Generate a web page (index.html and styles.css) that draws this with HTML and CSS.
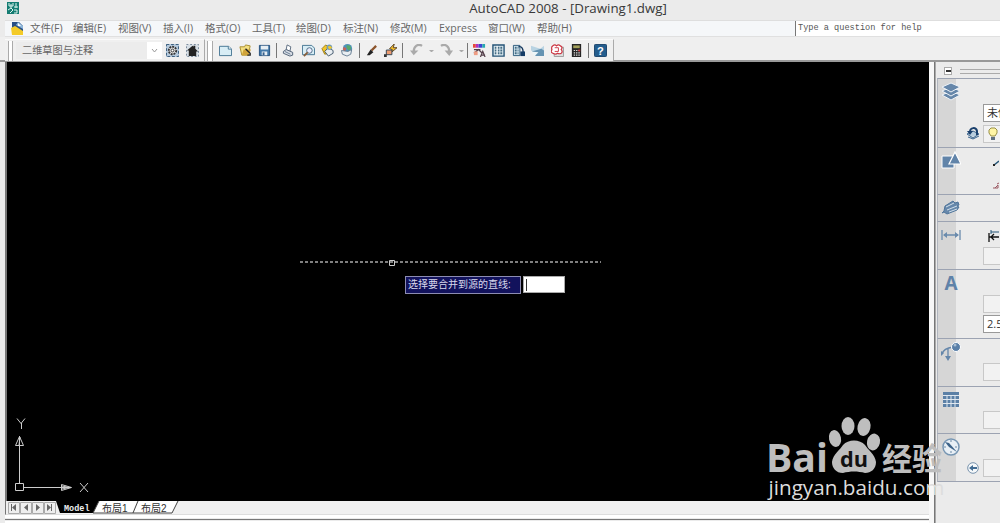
FILE: index.html
```
<!DOCTYPE html>
<html lang="zh-CN">
<head>
    <meta charset="UTF-8">
    <title>AutoCAD 2008 - [Drawing1.dwg]</title>
    <link rel="stylesheet" href="styles.css">
</head>
<body>
    <header class="titlebar">
        <svg class="app-icon" width="12" height="12" viewBox="0 0 12 12"><path fill="#147c72" d="M0 0h12v12H0z"/><path fill="none" stroke="#dff5ef" d="M2 1v3M4 2v4M6 1v3H2M9 1v5M1 8l3-2 2 2-3 3M7 8h3v3H7M7 5h4"/></svg>
        <h1>AutoCAD 2008 - [Drawing1.dwg]</h1>
    </header>

    <nav class="menubar">
        <svg class="doc-icon" width="13" height="13" viewBox="0 0 13 13"><path fill="#284f85" d="M1 0h7l4 4v8H1z"/><path fill="#8eb7da" d="M7 0l5 4v3L5 3z"/><path fill="#f4cb28" d="M0 6l4-2 8 5v4H1z"/><path fill="#fff" d="M7 1l3 3H7z"/></svg>
        <div class="menu-items">
            <span>文件(F)</span>
            <span>编辑(E)</span>
            <span>视图(V)</span>
            <span>插入(I)</span>
            <span>格式(O)</span>
            <span>工具(T)</span>
            <span>绘图(D)</span>
            <span>标注(N)</span>
            <span>修改(M)</span>
            <span>Express</span>
            <span>窗口(W)</span>
            <span>帮助(H)</span>
        </div>
        <div class="ask">Type a question for help</div>
    </nav>

    <div class="toolbars">
        <div class="toolbar workspaces">
            <i class="grip"></i>
            <div class="combo"><span>二维草图与注释</span><b><svg width="7" height="5" viewBox="0 0 7 5"><path d="M1 1l2.5 3L6 1" fill="none" stroke="#999"/></svg></b></div>
            <span class="tool"><svg viewBox="0 0 14 14"><path fill="#b5c9dc" d="M0 0h14v14H0z"/><path stroke="#315577" fill="none" stroke-dasharray="3 2" d="M.5.5h13v13H.5z"/><circle cx="7" cy="7" r="4" fill="#ddd" stroke="#333" stroke-width="2" stroke-dasharray="2 1"/><circle cx="7" cy="7" r="1.5" fill="#fff" stroke="#333"/></svg></span>
            <span class="tool"><svg viewBox="0 0 14 14"><path stroke="#708294" fill="#d5dde4" stroke-dasharray="2 2" d="M.5.5h13v13H.5z"/><path fill="#222" d="M1 7l6-5 1 1V2h2v3l3 3h-2v5H3V7z"/></svg></span>
        </div>
        <div class="toolbar standard">
            <i class="grip"></i>
            <span class="tool"><svg viewBox="0 0 14 14"><path fill="#d8edf5" stroke="#427291" d="M.5 2.500h10l3 3v7H.5z"/><path fill="#fff" stroke="#427291" d="M10 2.500v3h3"/></svg></span>
            <span class="tool"><svg viewBox="0 0 14 14"><path fill="#f4df80" stroke="#a88b2b" d="M1 3h5l1-2 5 1-2 10H3z"/><path fill="#d0a339" d="M3 12l2-6h8l-3 6z"/><path fill="none" stroke="#222" stroke-width="1.500" d="M7 5l5 5v2H9"/></svg></span>
            <span class="tool"><svg viewBox="0 0 14 14"><path fill="#4379a9" stroke="#244e7a" d="M1.500 1.500h11v11h-11z"/><path fill="#e7eef3" d="M3 2h8v4H3zM4 8h6v4H4z"/><path fill="#365f8b" d="M5 9h2v3H5z"/></svg></span>
            <i class="sep"></i>
            <span class="tool"><svg viewBox="0 0 14 14"><path fill="#fff" stroke="#57687c" d="M4.500 6l1-5 4 2-1 5z"/><path fill="#d8dde5" stroke="#4c5d72" d="M1.500 8l3-2 7 3v3l-3 1-7-3z"/><path stroke="#627992" d="M3 8l6 3"/></svg></span>
            <span class="tool"><svg viewBox="0 0 14 14"><path fill="#d8edf5" stroke="#427291" d="M.5 1.500h10l3 3v7H.5z"/><circle cx="8" cy="7" r="3" fill="#eef" stroke="#486881"/><path stroke="#875d3b" stroke-width="2" d="M6 9l-4 4"/></svg></span>
            <span class="tool"><svg viewBox="0 0 14 14"><path fill="#f4c629" stroke="#9b7a13" d="M1 5l4-4 3 2-3 5 3 2-4 1z"/><path fill="#e8edf1" stroke="#41566b" d="M4 8l4-4 5 3v3l-5 3z"/><circle cx="9" cy="3.500" r="3" fill="#6e9bbc"/><path fill="#efc72d" d="M7 3l3-1 2 2-3 2z"/></svg></span>
            <span class="tool"><svg viewBox="0 0 14 14"><circle cx="7" cy="5" r="5" fill="#4f91bc"/><path fill="#55a96b" d="M6 1l4 1 1 3-3 2-2-3z"/><path fill="#ca6055" d="M3 3l3 2-2 3-2-2z"/><path fill="#e9eef2" stroke="#637b91" d="M.5 7l7 1 4-2-1 5-4 2-5-2z"/></svg></span>
            <i class="sep"></i>
            <span class="tool"><svg viewBox="0 0 14 14"><path stroke="#8b542c" stroke-width="2.500" d="M12 2L7 7"/><path fill="#222" d="M6 6l3 3-4 3H2z"/></svg></span>
            <span class="tool"><svg viewBox="0 0 14 14"><path fill="#f7c22b" stroke="#574020" d="M6 5l5-5-1 4h4L8 9l1-3z"/><path fill="#ed9b70" stroke="#304250" d="M2.500 6.500h6v5h-6z"/><path fill="#333" d="M0 11h3v3H0z"/></svg></span>
            <i class="sep"></i>
            <span class="tool undo"><svg viewBox="0 0 14 14"><path d="M13 2C8-1 4 3 4 8" fill="none" stroke="#aaa" stroke-width="2.400"/><path fill="#aaa" d="M0 7h9l-5 5z"/></svg></span>
            <i class="drop"></i>
            <span class="tool undo"><svg viewBox="0 0 14 14"><path d="M1 2c5-3 9 1 9 6" fill="none" stroke="#aaa" stroke-width="2.400"/><path fill="#aaa" d="M5 7h9l-4 6z"/></svg></span>
            <i class="drop"></i>
            <i class="sep"></i>
            <span class="tool"><svg viewBox="0 0 14 14"><path fill="#e64a38" d="M0 0h3v4H0z"/><path fill="#b42fbd" d="M3 0h3v4H3z"/><path fill="#3c45d1" d="M6 0h4v4H6z"/><path fill="#27a8af" d="M10 0h3v4h-3z"/><path fill="none" stroke="#54404b" stroke-width="1.300" d="M1 6h7M1 10l5-4 4 4M8 14l2.500-6 2.500 6M9 12h4"/><path fill="#ee9c83" d="M1 8h4v4H1z"/></svg></span>
            <span class="tool"><svg viewBox="0 0 14 14"><path fill="#dceaf0" stroke="#245375" stroke-width="1.500" d="M1 1h12v12H1z"/><path stroke="#426b83" stroke-width="2" stroke-dasharray="2 1" d="M3 4h8M3 7h8M3 10h8"/><path stroke="#fff" d="M5.500 2v10"/></svg></span>
            <span class="tool"><svg viewBox="0 0 14 14"><path fill="#d7e9f2" stroke="#285879" d="M1.500 1.500h7v11h-7z"/><path stroke="#426b83" stroke-dasharray="2 1" stroke-width="2" d="M3 4h4M3 7h4M3 10h4"/><path fill="none" stroke="#183a60" stroke-width="1.500" d="M7 3c4-1 5 3 5 6"/><path fill="#153b65" d="M9 8h5v5H9z"/></svg></span>
            <span class="tool"><svg viewBox="0 0 14 14"><path fill="#b9d3e2" d="M0 2l10 3 4-3v5L8 10 0 7z"/><path fill="#6593b2" d="M1 8l10-3 3 2v6H5z"/><path fill="#edf5f8" d="M0 8l8 1-4 4z"/></svg></span>
            <span class="tool"><svg viewBox="0 0 14 14"><path fill="#ddd" stroke="#999" d="M3.500 3.500h10v10h-10z"/><path fill="#fff" stroke="#cb3642" stroke-width="1.300" d="M2 2q2-2 4 0 2-2 4 0 3 1 1 4 2 2 0 4-2 1-4 0-2 2-5 0-3-1-1-4-1-3 1-4z"/><path fill="none" stroke="#cb3642" d="M4 4h4v4H4"/></svg></span>
            <span class="tool"><svg viewBox="0 0 14 14"><path fill="#242424" d="M2 0h10v14H2z"/><path fill="#a3a05a" d="M3.500 1.500h7v3h-7z"/><path stroke="#ddd" stroke-width="1.300" stroke-dasharray="1.500 1" d="M4 7h7M4 9.500h7M4 12h7"/><path fill="#d23838" d="M9 6h2v2H9z"/></svg></span>
            <i class="sep"></i>
            <span class="tool help"><svg viewBox="0 0 14 14"><rect x=".5" y=".5" width="13" height="13" rx="1" fill="#235d8d" stroke="#163f67"/><text x="7" y="11.500">?</text></svg></span>
        </div>
    </div>

    <main class="workspace">
        <section class="document">
            <div class="canvas">
                <svg class="drawing" width="922" height="439" viewBox="7 62 922 439">
                    <path class="selected-line" d="M300 262h301"/>
                    <path class="cad-line" d="M389.500 260.500h5v5h-5z"/>
                    <path class="cad-line" d="M15.500 483.500h8v7h-8zM19.500 483v-47M23 487.500h48M15.500 445.500h8l-4-9zM19 445l1-8M61.500 484.500v6l10-3zM62 486l7 1.500-7 1.500M17 418.500l4 5 4-5M21.500 423v6M80 483l8 9M88 483l-8 9"/>
                </svg>
                <div class="prompt"><label>选择要合并到源的直线:</label><span class="entry"></span></div>
            </div>
            <div class="tabs">
                <svg width="175" height="14" viewBox="0 0 175 14">
                    <path fill="#eee" stroke="#aaa" d="M.5 1.500h11v11H.5zM12.500 1.500h11v11h-11zM24.500 1.500h11v11h-11zM36.500 1.500h11v11h-11z"/>
                    <path fill="#666" d="M8 3v7L4 6.500zM3 3h1v7H3zM20 3v7l-4-3.500zM28 3v7l4-3.500zM39 3v7l4-3.500zM43 3h1v7h-1z"/>
                    <path d="M48 0h43l-6 12H52z"/>
                    <path fill="#fff" d="M91 0h38l-5 12H86zM130 0h39l-5 12h-39z"/>
                    <path fill="none" stroke="#444" d="M91 0l-6 12h40l5-12M125 12h39l6-12"/>
                    <text class="model" x="56" y="10">Model</text>
                    <text x="94" y="10.500">布局1</text>
                    <text x="133" y="10.500">布局2</text>
                </svg>
            </div>
            <div class="dock"></div>
        </section>

        <aside class="dashboard">
            <div class="dash-head"><i></i><b></b></div>
            <div class="panel layers">
                <svg class="panel-icon" viewBox="0 0 20 20"><g fill="#6687aa" stroke="#eef3f8" stroke-width="1"><path d="M1 13l9-4 9 4-9 5z"/><path d="M1 9l9-4 9 4-9 5z"/><path d="M1 5l9-4 9 4-9 5z"/></g></svg>
                <div class="field layer-name">未保存</div>
                <svg class="layer-prev" width="15" height="14" viewBox="0 0 15 14"><path fill="#b8cddd" stroke="#41688f" d="M1 8l6-3 6 3-6 4zM2 11l5 2 6-3"/><path fill="none" stroke="#193f6c" stroke-width="2" d="M4 6c0-5 6-5 7-1v4"/><path fill="#193f6c" d="M1 5h6l-3 4z"/></svg>
                <div class="field lamp"><svg width="10" height="14" viewBox="0 0 10 14"><path fill="#fff5a5" stroke="#999045" d="M3 9L1 6V3l2-2h4l2 2v3L7 9z"/><path fill="#607080" d="M3 10h4v3H3z"/></svg></div>
            </div>
            <div class="panel draw">
                <svg class="panel-icon" viewBox="0 0 20 20"><path fill="#6184a9" stroke="#fff" d="M1 5h12v12H1z"/><path fill="#6184a9" stroke="#fff" stroke-width="1.200" d="M14 1l6 12H8z"/></svg>
                <svg class="mini mini-line" width="6" height="8" viewBox="0 0 6 8"><path stroke="#245577" stroke-width="1.500" d="M1 6l5-4"/><path fill="#222" d="M0 5h2v2H0z"/></svg>
                <svg class="mini mini-cloud" width="6" height="8" viewBox="0 0 6 8"><path fill="none" stroke="#9b5962" d="M0 6h5V3L2 6M4 2l2-1"/></svg>
            </div>
            <div class="panel tools">
                <svg class="panel-icon" viewBox="0 0 20 20"><path fill="#6688ab" stroke="#50759a" d="M1 15l2-2 1-5 8-5 2 2 3-1 1 3-2 1 2 1-2 3-10 4-3-2z"/><path stroke="#d3e0ea" d="M5 9l8-4M6 12l10-4M8 14l8-3"/></svg>
            </div>
            <div class="panel dims">
                <svg class="panel-icon" viewBox="0 0 20 20"><path fill="none" stroke="#6a8bad" stroke-width="1.300" d="M1 5v10M19 5v10M3 10h14"/><path fill="#6a8bad" d="M2 10l4-3v6zM18 10l-4-3v6z"/></svg>
                <svg class="mini mini-dim" width="11" height="13" viewBox="0 0 11 13"><path fill="none" stroke="#245577" d="M3 1v4M3 3h8"/><path fill="none" stroke="#111" stroke-width="1.300" d="M1 4v9M1 8h10M6 5L3 8l3 3"/></svg>
                <div class="field empty-a"></div>
            </div>
            <div class="panel text">
                <svg class="panel-icon" viewBox="0 0 20 20"><text x="10" y="17">A</text></svg>
                <div class="field empty-b"></div>
                <div class="field height">2.5</div>
            </div>
            <div class="panel leader">
                <svg class="panel-icon" viewBox="0 0 20 20"><path fill="none" stroke="#6486aa" stroke-width="1.300" d="M1 12C2 8 5 6 12 5M7 6v9"/><path fill="#6486aa" d="M0 9v5l3-3zM4 14h6l-3 5z"/><circle cx="15" cy="5" r="4.500" fill="#597fa8" stroke="#fff"/><circle cx="14" cy="3" r="1.500" fill="#a7bdd2"/></svg>
                <div class="field empty-c"></div>
            </div>
            <div class="panel table">
                <svg class="panel-icon" viewBox="0 0 20 20"><path fill="#5b80a6" d="M2 2h16v15H2z"/><path fill="none" stroke="#e0e8f0" d="M2 5.500h16M2 9.500h16M2 13.500h16M6 6v11M10 6v11M14 6v11"/></svg>
                <div class="field empty-c"></div>
            </div>
            <div class="panel nav">
                <svg class="panel-icon" viewBox="0 0 20 20"><circle cx="10" cy="10" r="8" fill="#e8eff5" stroke="#7796b3" stroke-width="1.500"/><path stroke="#6c89a5" stroke-dasharray="2 9" d="M10 3v14M3 10h14"/><path fill="#3d6389" d="M4 5l4 1 8 9-8-5z"/></svg>
                <svg class="back" width="12" height="12" viewBox="0 0 12 12"><circle cx="6" cy="6" r="5.300" fill="#f5f8fa" stroke="#7792ac"/><path fill="#426c93" d="M2 6l4-3v2h4v2H6v2z"/></svg>
                <div class="field empty-d"></div>
            </div>
        </aside>
    </main>

    <svg class="watermark" width="184" height="86" viewBox="764 414 184 86">
        <g fill="#bebebe">
            <text class="brand" x="766" y="472" textLength="62" lengthAdjust="spacingAndGlyphs">Bai</text>
            <ellipse cx="835" cy="438.500" rx="6" ry="8.500" transform="rotate(-12 835 438.500)"/>
            <ellipse cx="848" cy="426" rx="6.500" ry="9"/>
            <ellipse cx="864" cy="427" rx="6.500" ry="9" transform="rotate(12 864 427)"/>
            <ellipse cx="873.500" cy="442" rx="6.500" ry="8.500" transform="rotate(12 873.500 442)"/>
            <path d="M843 445c5-6 17-6 22 0 3 5 10 9 11 17 0 7-5 11-11 11-7-2-15-2-22 0-7 0-11-5-11-11 1-8 8-12 11-17z"/>
            <text class="jingyan" x="882" y="469.500" textLength="60" lengthAdjust="spacingAndGlyphs">经验</text>
        </g>
        <text class="du" x="840" y="467" textLength="28" lengthAdjust="spacingAndGlyphs">du</text>
        <text class="url" x="768.500" y="495" textLength="176" lengthAdjust="spacingAndGlyphs">jingyan.baidu.com</text>
    </svg>
</body>
</html>
```

FILE: styles.css
```
* {
    box-sizing: border-box;
}

body {
    margin: 0;
    width: 1000px;
    height: 523px;
    overflow: hidden;
    background: #ebebeb;
    color: #666;
    font-family: "Open Sans", "Noto Sans CJK SC", sans-serif;
    font-size: 11px;
}

svg {
    display: block;
    flex: none;
}

.titlebar {
    position: relative;
    height: 20px;
    padding-right: 0;
}

.app-icon {
    position: absolute;
    left: 7px;
    top: 2px;
}

.titlebar h1 {
    margin: 0;
    padding-left: 136px;
    text-align: center;
    font-size: 13.300px;
    font-weight: normal;
    line-height: 17px;
    color: #393939;
}

.menubar {
    display: flex;
    height: 17px;
    margin-left: 5px;
    padding-left: 6px;
    border-top: 1px solid #dedede;
    border-bottom: 1px solid #e0e0e0;
    background: #f5f7f9;
}

.doc-icon {
    margin-top: 1px;
}

.menu-items {
    display: grid;
    grid-template-columns: 43px 45px 45px 42px 47px 44px 47px 47px 49px 49px 49px 40px;
    width: 772px;
    padding-left: 6px;
    font-size: 10.500px;
    line-height: 15px;
    white-space: nowrap;
}

.ask {
    flex: 1;
    margin-left: -1px;
    padding-left: 2px;
    border-left: 1px solid #777;
    background: #fff;
    color: #555;
    font: 8.600px/15px "Liberation Mono", monospace;
    white-space: pre;
}

.toolbars {
    display: flex;
    height: 25px;
    padding: 2px 0 0 5px;
    background: #efefef;
    border-bottom: 2px solid #999;
}

.toolbar {
    display: flex;
    align-items: center;
    height: 22px;
    border-right: 1px solid #aaa;
    border-top: 1px solid #fafafa;
    background: #f0f0f0;
}

.workspaces {
    width: 200px;
}

.standard {
    width: 409px;
    padding-left: 1px;
}

.grip {
    width: 6px;
    height: 20px;
    margin: 0 3px 0 1px;
    border: solid #aaa;
    border-width: 0 1px;
    background: #fff;
    flex: none;
}

.workspaces .grip {
    width: 5px;
    margin-left: 3px;
}

.combo {
    display: flex;
    width: 146px;
    height: 17px;
    padding-left: 6px;
    background: #ececec;
    line-height: 16px;
    font-size: 10.200px;
    white-space: nowrap;
}

.combo b {
    display: grid;
    place-items: center;
    width: 15px;
    margin-left: auto;
    background: #fff;
}

.tool {
    display: grid;
    place-items: center;
    width: 19.500px;
    flex: none;
}

.tool svg {
    width: 13px;
    height: 13px;
}

.workspaces .combo {
    margin-right: 1px;
}

.undo {
    width: 22px;
}

.sep {
    width: 1px;
    height: 15px;
    margin: 0 2px 0 1.500px;
    background: #777;
    flex: none;
}

.drop {
    width: 5px;
    margin: 0 1.500px;
    border: 2.500px solid transparent;
    border-top-color: #aaa;
    border-bottom: 0;
    flex: none;
}

.help text {
    fill: #fff;
    font: bold 12px "Liberation Sans", sans-serif;
    text-anchor: middle;
}

.workspace {
    display: flex;
    height: 461px;
}

.document {
    width: 929px;
    padding-left: 5px;
}

.canvas {
    position: relative;
    height: 439px;
    border-left: 2px solid #777;
    background: #000;
}

.selected-line {
    stroke: #aaa;
    stroke-width: 1.400;
    stroke-dasharray: 3 2;
}

.cad-line {
    fill: none;
    stroke: #ccc;
}

.prompt {
    position: absolute;
    left: 398px;
    top: 214px;
    display: flex;
    gap: 2px;
}

.prompt label {
    width: 116px;
    height: 18px;
    padding-left: 2px;
    border: 1px solid #8c8cb1;
    background: #12125c;
    color: #d9d9ec;
    font-size: 10px;
    line-height: 15px;
    white-space: nowrap;
}

.entry {
    width: 42px;
    height: 17px;
    padding: 2px;
    border: 1px solid #aaa;
    background: #fff;
}

.entry::before {
    content: "";
    display: block;
    width: 1px;
    height: 12px;
    background: #333;
}

.tabs {
    height: 14px;
    padding-left: 2px;
    background: #f0f0f0;
    border-left: 1px solid #777;
    border-bottom: 1px solid #ddd;
}

.tabs text {
    font: 10px "Liberation Sans", "Noto Sans CJK SC", sans-serif;
    fill: #333;
}

.tabs .model {
    fill: #eee;
    font: bold 8.500px "Liberation Mono", monospace;
}

.dock {
    height: 8px;
    margin-right: -4px;
    border-top: 3px solid #fff;
    border-bottom: 2px solid #fff;
    background: #777;
    background-clip: content-box;
    padding: 1px 0;
}

.dashboard {
    width: 71px;
    padding-left: 3px;
    border-left: 5px solid #f7f7f7;
    background: #ebebeb;
    box-shadow: inset 1px 0 #777, inset 2px 0 #aaa;
}

.dash-head {
    display: flex;
    align-items: center;
    gap: 8px;
    height: 16px;
    padding: 2px 0 0 7px;
}

.dash-head i {
    width: 8px;
    height: 8px;
    border: 1px solid #aaa;
    background: linear-gradient(#333, #333) center / 5px 2px no-repeat #fff;
}

.dash-head b {
    flex: 1;
    height: 5px;
    border: solid #aaa;
    border-width: 1px 0;
}

.panel {
    display: grid;
    grid-template-columns: 18px 12px 15px 1fr;
    align-items: start;
    height: 48px;
    border-top: 1px solid #9ca3b2;
    border-left: 1px solid #b0b5be;
    background: linear-gradient(90deg, #d6d6d6 18px, #ebebeb 18px);
    overflow: hidden;
}

.panel-icon {
    grid-area: 1 / 1;
    width: 20px;
    height: 20px;
    margin: 3px 0 0 3px;
}

.field {
    grid-column: 4;
    grid-row: 1;
    width: 40px;
    height: 18px;
    border: 1px solid #c8c8c8;
    background: #f2f2f2;
}

.layers {
    height: 69px;
}

.layer-name,
.height {
    padding-left: 3px;
    border-color: #999;
    background: #fff;
    color: #333;
    font-size: 11px;
    line-height: 16px;
}

.layer-name {
    margin-top: 25px;
}

.layer-prev {
    grid-area: 1 / 2;
    margin: 47px 0 0 10px;
}

.lamp {
    margin-top: 46px;
    padding: 1px 4px;
}

.draw {
    height: 47px;
}

.tools {
    height: 27px;
}

.dims {
    height: 48px;
}

.mini {
    grid-area: 1 / 4;
}

.mini-line {
    margin: 11px 0 0 10px;
}

.mini-cloud {
    margin: 34px 0 0 10px;
}

.mini-dim {
    margin: 7px 0 0 5px;
}

.empty-a {
    margin-top: 25px;
}

.text {
    height: 69px;
}

.text text {
    font: bold 19px "Open Sans", sans-serif;
    text-anchor: middle;
    fill: #5f82a8;
}

.empty-b {
    margin-top: 25px;
}

.height {
    margin-top: 45px;
}

.empty-c {
    margin-top: 24px;
}

.table {
    height: 47px;
}

.nav {
    height: 49px;
    border-bottom: 1px solid #9ca3b2;
}

.back {
    grid-area: 1 / 2;
    margin: 28px 0 0 11px;
}

.empty-d {
    margin-top: 25px;
}

.watermark {
    position: absolute;
    left: 764px;
    top: 414px;
}

.brand {
    font: bold 39px "Open Sans", sans-serif;
}

.jingyan {
    font: bold 31px "Noto Sans CJK SC", sans-serif;
}

.du {
    font: bold 22px "Open Sans", sans-serif;
    fill: #111;
}

.url {
    fill: #ddd;
    font: 20px "Open Sans", sans-serif;
}
```
